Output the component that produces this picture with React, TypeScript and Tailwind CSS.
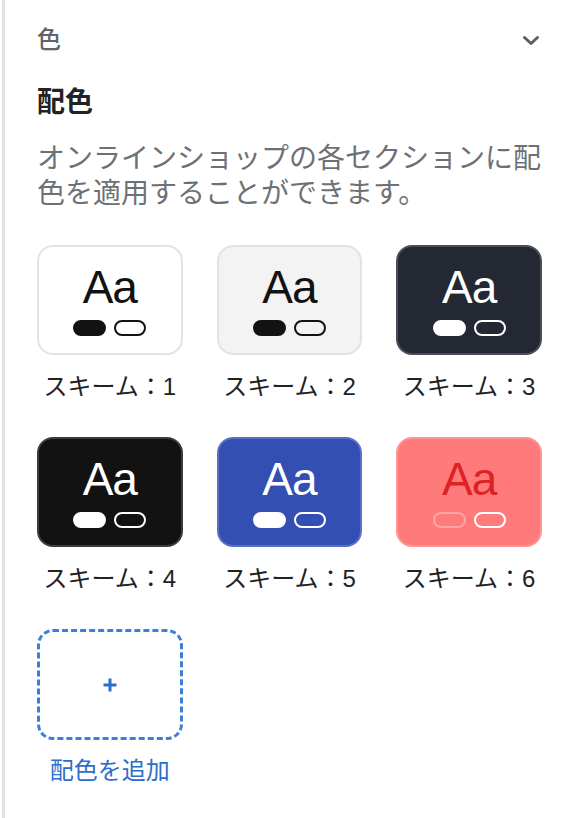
import React from "react";

type Scheme = {
  name: string;
  card: string;
  text: string;
  solid: string;
  outline: string;
};

const SCHEMES: Scheme[] = [
  { name: "スキーム：1", card: "bg-white border-[#e1e3e5]", text: "text-[#121212]", solid: "bg-[#121212] border-[#121212]", outline: "border-[#121212]" },
  { name: "スキーム：2", card: "bg-[#f3f3f3] border-[#e1e3e5]", text: "text-[#121212]", solid: "bg-[#121212] border-[#121212]", outline: "border-[#121212]" },
  { name: "スキーム：3", card: "bg-[#242833] border-[#4a4e58]", text: "text-white", solid: "bg-white border-white", outline: "border-white" },
  { name: "スキーム：4", card: "bg-[#121212] border-[#3c3c3c]", text: "text-white", solid: "bg-white border-white", outline: "border-white" },
  { name: "スキーム：5", card: "bg-[#334fb4] border-[#5a72c6]", text: "text-white", solid: "bg-white border-white", outline: "border-white" },
  { name: "スキーム：6", card: "bg-[#ff7b7b] border-[#ff9494]", text: "text-[#db2323]", solid: "bg-transparent border-[#ffa3a3]", outline: "border-white" },
];

function SchemeCard({ s }: { s: Scheme }) {
  return (
    <div className="flex flex-col items-center">
      <div className={`w-full h-[110px] rounded-[16px] border-2 flex flex-col items-center justify-center ${s.card}`}>
        <div className={`text-[46px] leading-none tracking-[-1px] font-['Liberation_Sans',sans-serif] ${s.text}`}>Aa</div>
        <div className="flex gap-2 mt-[10px]">
          <span className={`w-[33px] h-4 rounded-full border-2 ${s.solid}`} />
          <span className={`w-[32px] h-4 rounded-full border-2 ${s.outline}`} />
        </div>
      </div>
      <div className="mt-4 text-[24px] leading-8 text-[#202223]">{s.name}</div>
    </div>
  );
}

export default function App() {
  return (
    <div className="min-h-screen bg-white ml-[2px] border-l-[3px] border-[#e1e1e6] pl-[32px] pr-[24px] pt-6 font-['Liberation_Sans','Noto_Sans_CJK_JP',sans-serif]">
      <div className="flex items-center justify-between h-8">
        <span className="text-[24px] leading-8 font-medium text-[#616469]">色</span>
        <svg width="18" height="11" viewBox="0 0 18 11" className="mr-[2px]" fill="none">
          <path d="M2.5 2.5l6.5 6 6.5-6" stroke="#5c5f62" strokeWidth="3" strokeLinecap="round" strokeLinejoin="round" />
        </svg>
      </div>

      <h2 className="mt-[29px] text-[28px] leading-9 font-bold text-[#202223]">配色</h2>
      <p className="mt-5 text-[28px] leading-[35px] text-[#6d7175]">
        オンラインショップの各セクションに配色を適用することができます。
      </p>

      <div className="mt-[34px] grid grid-cols-3 gap-x-[34px] gap-y-[34px]">
        {SCHEMES.map((s) => (
          <SchemeCard key={s.name} s={s} />
        ))}
        <div className="flex flex-col items-center">
          <button className="w-full h-[111px] rounded-[16px] border-[3px] border-dashed border-[#3a7fd8] flex items-center justify-center">
            <svg width="16" height="16" viewBox="0 0 16 16" fill="none">
              <path d="M8 1.5v13M1.5 8h13" stroke="#2c6ecb" strokeWidth="3" />
            </svg>
          </button>
          <div className="mt-[15px] text-[24px] leading-8 text-[#2c6ecb]">配色を追加</div>
        </div>
      </div>
    </div>
  );
}
